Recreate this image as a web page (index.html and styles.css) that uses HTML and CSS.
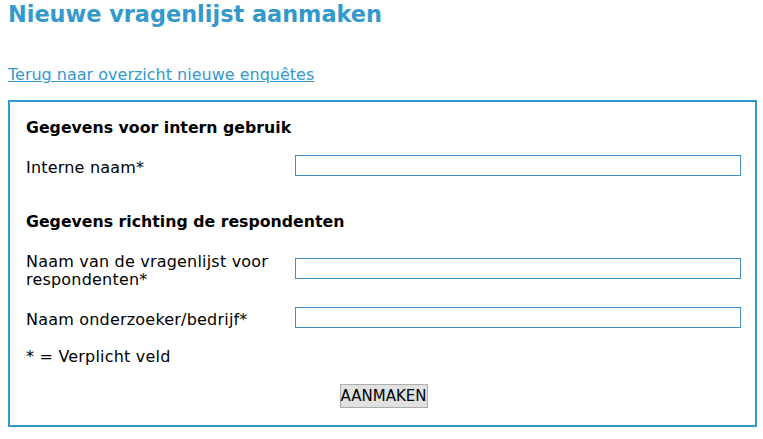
FILE: index.html
```html
<!DOCTYPE html>
<html lang="nl">
<head>
<meta charset="utf-8">
<title>Nieuwe vragenlijst aanmaken</title>
<link rel="stylesheet" href="styles.css">
</head>
<body>
<h1 class="title">Nieuwe vragenlijst aanmaken</h1>
<p class="back"><a href="#">Terug naar overzicht nieuwe enquêtes</a></p>
<form class="box">
  <h2 class="section">Gegevens voor intern gebruik</h2>
  <div class="row">
    <label class="label" for="f1">Interne naam*</label>
    <input class="field" id="f1" type="text">
  </div>
  <h2 class="section section-2">Gegevens richting de respondenten</h2>
  <div class="row">
    <label class="label" for="f2">Naam van de vragenlijst voor respondenten*</label>
    <input class="field" id="f2" type="text">
  </div>
  <div class="row row-3">
    <label class="label" for="f3">Naam onderzoeker/bedrijf*</label>
    <input class="field" id="f3" type="text">
  </div>
  <p class="note">* = Verplicht veld</p>
  <div class="actions">
    <button class="btn" type="button">AANMAKEN</button>
  </div>
</form>
</body>
</html>
```
FILE: styles.css
```css
html, body {
  margin: 0;
  padding: 0;
  background: #fff;
}
body {
  padding: 0 8px;
  font-family: "DejaVu Sans", Verdana, sans-serif;
  font-size: 16px;
  line-height: 18px;
  color: #000;
}
.title {
  margin: 0;
  padding-top: 1px;
  font-size: 22.4px;
  line-height: 26px;
  font-weight: bold;
  color: #3399cc;
}
.back {
  margin: 39px 0 0 0;
  line-height: 18px;
}
.back a {
  color: #3399cc;
  text-decoration: underline;
}
.box {
  margin-top: 16px;
  width: 749px;
  box-sizing: border-box;
  border: 2px solid #3399cc;
  padding: 16px 14px 17px 16px;
}
.section {
  margin: 0;
  font-size: 15.75px;
  line-height: 20px;
  font-weight: bold;
}
.section-2 {
  margin-top: 35px;
}
.row {
  display: grid;
  grid-template-columns: 269px 446px;
  align-items: center;
  margin-top: 15px;
}
.row-3 {
  margin-top: 16px;
}
.label {
  padding-top: 6px;
  line-height: 18px;
  letter-spacing: 0.2px;
}
.field {
  box-sizing: border-box;
  height: 21px;
  width: 446px;
  margin: 0;
  border: 1px solid #3d8fc4;
  padding: 0 3px;
  font: inherit;
}
.note {
  margin: 19px 0 0 0;
  line-height: 18px;
  letter-spacing: 0.2px;
}
.actions {
  display: flex;
  justify-content: center;
  margin-top: 18px;
}
.btn {
  font-family: "DejaVu Sans", Verdana, sans-serif;
  font-size: 15px;
  width: 88px;
  height: 24px;
  padding: 0;
  background: #e1e1e1;
  border: 1px solid #adadad;
  border-radius: 0;
  color: #000;
}
```
